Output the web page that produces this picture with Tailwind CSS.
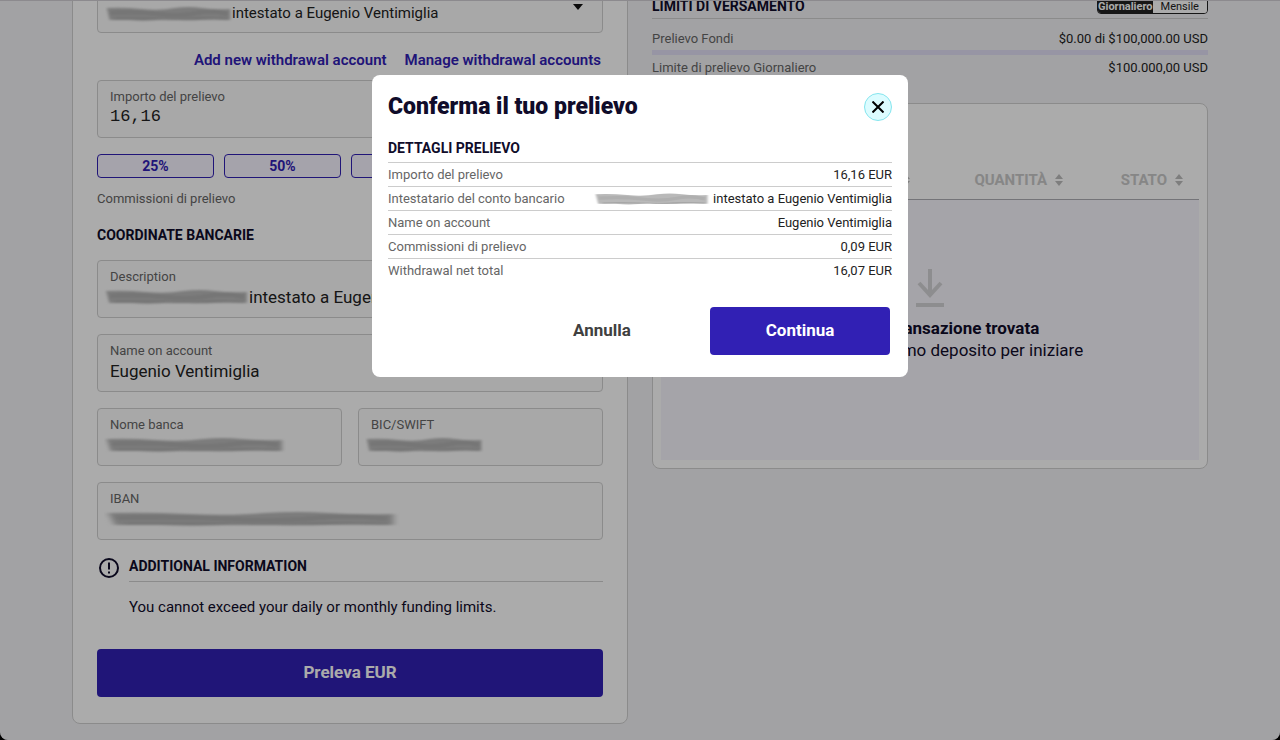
<!DOCTYPE html>
<html lang="it" class="bg-black">
  <head>
    <meta charset="UTF-8" />
    <meta name="viewport" content="width=device-width, initial-scale=1.0" />
    <title>Preleva EUR</title>
    <script src="https://cdn.jsdelivr.net/npm/@tailwindcss/browser@4"></script>
  </head>
  <body
    class="relative h-screen overflow-hidden rounded-b-lg bg-[#f2f2f5] font-['Roboto','Liberation_Sans',sans-serif] text-[#222222]"
  >
    <!-- Shared shapes -->
    <svg class="absolute" width="0" height="0" aria-hidden="true">
      <defs>
        <filter id="soft" x="-10%" y="-50%" width="120%" height="200%">
          <feGaussianBlur stdDeviation="1.6 0.9" />
        </filter>
        <symbol id="smudge" viewBox="0 0 140 20" preserveAspectRatio="none">
          <g filter="url(#soft)">
            <path
              d="M2 4 Q20 3 40 5 T76 4 Q92 2 106 4 T137 5 L137 16 Q118 15 104 16 T66 15 Q46 18 26 16 L5 16 Z"
              fill="#b9b9b9"
            />
            <path
              d="M6 9 Q34 7 58 10 T100 9 T134 10"
              fill="none"
              stroke="#afafaf"
              stroke-width="4"
            />
            <path
              d="M10 15 Q30 14 56 15 T92 15 T134 15"
              fill="none"
              stroke="#9f9f9f"
              stroke-width="1"
            />
          </g>
        </symbol>
        <symbol id="sort" viewBox="0 0 8 12">
          <path d="M4 0 L8 5 H0 Z M0 7 H8 L4 12 Z" fill="#bdbdbd" />
        </symbol>
      </defs>
    </svg>

    <main class="-mt-[50px] grid grid-cols-2 items-start gap-6 px-[72px]">
      <!-- Withdrawal form -->
      <form
        class="rounded-b-lg border border-[#d0d0d0] bg-white px-6 pt-6 pb-[26px]"
      >
        <div class="relative">
          <select
            aria-label="Conto di prelievo"
            class="h-[58px] w-full appearance-none rounded border border-[#d0d0d0] bg-[#fbfbfb] pt-[18px] pl-[134px] text-[15px]"
          >
            <option>intestato a Eugenio Ventimiglia</option>
          </select>
          <svg class="absolute top-[29px] left-2 h-5 w-[128px]">
            <use href="#smudge" />
          </svg>
          <svg
            class="absolute top-[29px] right-5 h-[6px] w-[10px]"
            viewBox="0 0 10 6"
          >
            <path d="M0 0 H10 L5 6 Z" fill="#111111" />
          </svg>
        </div>

        <div
          class="mt-4 mb-[9px] flex justify-end gap-[18px] pr-[2px] text-[15px] leading-[22px] font-semibold text-[#3120b4]"
        >
          <a href="#">Add new withdrawal account</a>
          <a href="#">Manage withdrawal accounts</a>
        </div>

        <div
          class="h-[58px] rounded border border-[#d0d0d0] bg-[#fbfbfb] px-3 pt-[6px]"
        >
          <label for="amount" class="block text-[13px] leading-5 text-[#666666]"
            >Importo del prelievo</label
          >
          <input
            id="amount"
            value="16,16"
            class="block h-5 w-full font-['Liberation_Mono',monospace] text-[17px] leading-5 outline-none"
          />
        </div>

        <div class="mt-4 flex gap-[10px] text-sm font-bold text-[#3120b4]">
          <button
            type="button"
            class="h-6 w-[117px] rounded border border-[#3120b4] bg-[#f7f4ff]"
          >
            25%
          </button>
          <button
            type="button"
            class="h-6 w-[117px] rounded border border-[#3120b4] bg-[#f7f4ff]"
          >
            50%
          </button>
          <button
            type="button"
            class="h-6 w-[117px] rounded border border-[#3120b4] bg-[#f7f4ff]"
          >
            75%
          </button>
          <button
            type="button"
            class="h-6 flex-1 rounded border border-[#3120b4] bg-[#f7f4ff]"
          >
            100%
          </button>
        </div>
        <p class="mt-[11px] text-[13px] leading-5 text-[#666666]">
          Commissioni di prelievo
        </p>

        <h2 class="mt-4 mb-[15px] text-sm leading-5 font-bold text-[#100c2a]">
          COORDINATE BANCARIE
        </h2>
        <div class="grid grid-cols-2 gap-4">
          <div
            class="relative col-span-2 h-[58px] rounded border border-[#d0d0d0] bg-[#fbfbfb] px-3 pt-[6px]"
          >
            <label
              for="description"
              class="block text-[13px] leading-5 text-[#666666]"
              >Description</label
            >
            <input
              id="description"
              value="intestato a Eugenio Ventimiglia"
              class="block h-5 w-full pl-[139px] text-[17px] leading-5 outline-none"
            />
            <svg class="absolute top-[26px] left-[6px] h-5 w-[146px]">
              <use href="#smudge" />
            </svg>
          </div>
          <div
            class="col-span-2 h-[58px] rounded border border-[#d0d0d0] bg-[#fbfbfb] px-3 pt-[6px]"
          >
            <label for="name" class="block text-[13px] leading-5 text-[#666666]"
              >Name on account</label
            >
            <input
              id="name"
              value="Eugenio Ventimiglia"
              class="block h-5 w-full text-[17px] leading-5 outline-none"
            />
          </div>
          <div
            class="relative h-[58px] rounded border border-[#d0d0d0] bg-[#fbfbfb] px-3 pt-[6px]"
          >
            <label for="bank" class="block text-[13px] leading-5 text-[#666666]"
              >Nome banca</label
            >
            <input id="bank" class="block h-5 w-full outline-none" />
            <svg class="absolute top-[26px] left-[6px] h-5 w-[182px]">
              <use href="#smudge" />
            </svg>
          </div>
          <div
            class="relative h-[58px] rounded border border-[#d0d0d0] bg-[#fbfbfb] px-3 pt-[6px]"
          >
            <label for="bic" class="block text-[13px] leading-5 text-[#666666]"
              >BIC/SWIFT</label
            >
            <input id="bic" class="block h-5 w-full outline-none" />
            <svg class="absolute top-[26px] left-[6px] h-5 w-[119px]">
              <use href="#smudge" />
            </svg>
          </div>
          <div
            class="relative col-span-2 h-[58px] rounded border border-[#d0d0d0] bg-[#fbfbfb] px-3 pt-[6px]"
          >
            <label for="iban" class="block text-[13px] leading-5 text-[#666666]"
              >IBAN</label
            >
            <input id="iban" class="block h-5 w-full outline-none" />
            <svg class="absolute top-[26px] left-[6px] h-5 w-[296px]">
              <use href="#smudge" />
            </svg>
          </div>
        </div>

        <div class="mt-4 flex gap-2 text-[#100c2a]">
          <svg
            class="size-6 shrink-0"
            viewBox="0 0 24 24"
            fill="none"
            stroke="currentColor"
            stroke-width="2"
          >
            <circle cx="12" cy="12" r="9" />
            <path d="M12 6.500 V13.500 M12 15.500 V17.500" />
          </svg>
          <div class="flex-1">
            <h2
              class="border-b border-[#d0d0d0] pb-[5px] text-sm leading-5 font-bold"
            >
              ADDITIONAL INFORMATION
            </h2>
            <p class="mt-[15px] text-[15px] leading-5">
              You cannot exceed your daily or monthly funding limits.
            </p>
          </div>
        </div>

        <button
          type="button"
          class="mt-8 h-12 w-full rounded bg-[#3120b4] text-[17px] font-bold text-white"
        >
          Preleva EUR
        </button>
      </form>

      <div class="pt-[45px]">
        <!-- Limits -->
        <section class="text-[13px]">
          <div
            class="flex h-6 items-end justify-between border-b border-[#d0d0d0]"
          >
            <h2 class="pb-[2px] text-sm leading-5 font-bold text-[#100c2a]">
              LIMITI DI VERSAMENTO
            </h2>
            <div
              class="mb-1 flex h-[18px] w-[111px] overflow-hidden rounded border border-[#222222] text-[11px] leading-[20px]"
            >
              <button type="button" class="bg-[#222222] font-bold text-white">
                Giornaliero
              </button>
              <button type="button" class="flex-1 bg-white">Mensile</button>
            </div>
          </div>
          <div class="mt-[10px] flex justify-between leading-5">
            <span class="text-[#666666]">Prelievo Fondi</span>
            <span>$0.00 di $100,000.00 USD</span>
          </div>
          <div class="mt-px h-[5px] bg-[#e2dff5]"></div>
          <div class="mt-[3px] flex justify-between leading-5">
            <span class="text-[#666666]">Limite di prelievo Giornaliero</span>
            <span>$100.000,00 USD</span>
          </div>
        </section>

        <!-- Transactions -->
        <section
          class="mt-[25px] rounded-lg border border-[#d0d0d0] bg-white px-2 pb-2"
        >
          <table class="w-full">
            <thead>
              <tr
                class="border-b border-[#adadb3] text-[15px] leading-5 font-black text-[#c8c8c8]"
              >
                <th class="pt-[66px] pr-4 pb-[9px] text-left">
                  <span class="flex items-center gap-2 pl-4"
                    >DATA<svg class="h-3 w-2"><use href="#sort" /></svg
                  ></span>
                </th>
                <th class="pt-[66px] pr-4 pb-[9px]">
                  <span class="flex items-center justify-end gap-2"
                    >TIPO<svg class="h-3 w-2"><use href="#sort" /></svg
                  ></span>
                </th>
                <th class="w-[153px] pt-[66px] pr-4 pb-[9px]">
                  <span class="flex items-center justify-end gap-2"
                    >QUANTITÀ<svg class="h-3 w-2"><use href="#sort" /></svg
                  ></span>
                </th>
                <th class="w-[120px] pt-[66px] pr-4 pb-[9px]">
                  <span class="flex items-center justify-end gap-2"
                    >STATO<svg class="h-3 w-2"><use href="#sort" /></svg
                  ></span>
                </th>
              </tr>
            </thead>
            <tbody>
              <tr>
                <td
                  colspan="4"
                  class="bg-[#f7f5fc] pt-[69px] pb-[99px] text-center text-[17px] leading-[22px] text-[#100c2a]"
                >
                  <svg
                    class="mx-auto mb-[10px] h-[38px] w-7"
                    viewBox="0 0 28 38"
                    fill="none"
                    stroke="#d3d3d6"
                    stroke-width="4"
                  >
                    <path d="M14 0 V26 M3 14 L14 26 L25 14 M0 36 H28" />
                  </svg>
                  <p class="font-bold">Nessuna transazione trovata</p>
                  <p>Effettua il tuo primo deposito per iniziare</p>
                </td>
              </tr>
            </tbody>
          </table>
        </section>
      </div>
    </main>

    <!-- Confirmation dialog -->
    <div
      class="absolute inset-0 flex items-start justify-center border-t border-[#8c8a8e] bg-black/33 pt-[74px]"
    >
      <div
        role="dialog"
        aria-labelledby="dialog-title"
        class="w-[536px] rounded-lg bg-white px-4 pt-[18px] pb-[22px]"
      >
        <div class="flex items-center justify-between">
          <h1
            id="dialog-title"
            class="text-[23px] leading-7 font-black text-[#100c2a]"
          >
            Conferma il tuo prelievo
          </h1>
          <button
            type="button"
            aria-label="Chiudi"
            class="flex size-7 items-center justify-center rounded-full border border-[#85e5ee] bg-[#dcfcff]"
          >
            <svg
              class="size-3"
              viewBox="0 0 12 12"
              stroke="#000000"
              stroke-width="2"
            >
              <path d="M0.500 0.500 L11.500 11.500 M11.500 0.500 L0.500 11.500" />
            </svg>
          </button>
        </div>

        <h2
          class="mt-[17px] border-b border-[#cccccc] pb-1 text-sm leading-5 font-bold text-[#100c2a]"
        >
          DETTAGLI PRELIEVO
        </h2>
        <dl class="divide-y divide-[#cccccc] text-[13px] leading-[23px]">
          <div class="flex justify-between">
            <dt class="text-[#666666]">Importo del prelievo</dt>
            <dd>16,16 EUR</dd>
          </div>
          <div class="flex justify-between">
            <dt class="text-[#666666]">Intestatario del conto bancario</dt>
            <dd class="flex items-center gap-[3px]">
              <svg class="h-4 w-[116px]"><use href="#smudge" /></svg>
              intestato a Eugenio Ventimiglia
            </dd>
          </div>
          <div class="flex justify-between">
            <dt class="text-[#666666]">Name on account</dt>
            <dd>Eugenio Ventimiglia</dd>
          </div>
          <div class="flex justify-between">
            <dt class="text-[#666666]">Commissioni di prelievo</dt>
            <dd>0,09 EUR</dd>
          </div>
          <div class="flex justify-between">
            <dt class="text-[#666666]">Withdrawal net total</dt>
            <dd>16,07 EUR</dd>
          </div>
        </dl>

        <div
          class="mt-[25px] flex justify-end gap-[18px] pr-[2px] text-[17px] font-bold"
        >
          <button type="button" class="h-12 w-[180px] text-[#404040]">
            Annulla
          </button>
          <button
            type="button"
            class="h-12 w-[180px] rounded bg-[#3120b4] text-white"
          >
            Continua
          </button>
        </div>
      </div>
    </div>
  </body>
</html>
